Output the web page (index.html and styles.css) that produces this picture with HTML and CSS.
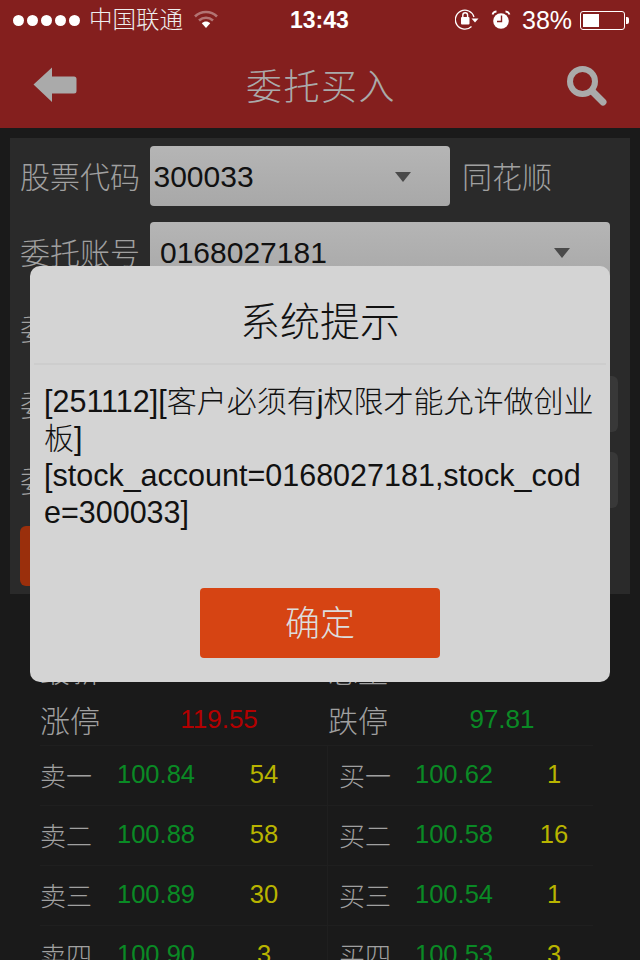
FILE: index.html
```html
<!DOCTYPE html>
<html lang="zh-CN">
<head>
<meta charset="utf-8">
<title>委托买入</title>
<link rel="stylesheet" href="styles.css">
</head>
<body>
<div class="page">
  <div class="top">
    <div class="status">
      <div class="dots"><i></i><i></i><i></i><i></i><i></i></div>
      <span class="carrier">中国联通</span>
      <svg class="wifi" width="24" height="18" viewBox="0 0 24 18"><path d="M1 6.500C7 .5 17 .5 23 6.500" fill="none" stroke="#fff" stroke-opacity=".38" stroke-width="2.600"/><path d="M5 10.500C9.200 6.800 14.800 6.800 19 10.500" fill="none" stroke="#fff" stroke-opacity=".38" stroke-width="2.600"/><path d="M7.800 13.200C10.200 11 13.800 11 16.200 13.200L12 18Z" fill="#fff"/></svg>
      <span class="time">13:43</span>
      <svg class="lock" width="24" height="22" viewBox="0 0 24 22"><path d="M19 8A9.500 9.500 0 1 0 16.500 17.500" fill="none" stroke="#fff" stroke-width="1.300"/><path d="M16.500 9.500H23.500L20 13.500Z" fill="#fff"/><rect x="6" y="8" width="8.500" height="7.500" rx="1" fill="#fff"/><path d="M7.800 8V6.200a2.400 2.400 0 0 1 4.800 0V8" fill="none" stroke="#fff" stroke-width="1.400"/></svg>
      <svg class="alarm" width="20" height="20" viewBox="0 0 20 20"><circle cx="10" cy="11" r="7.800" fill="#fff"/><path d="M10.500 5.500V11.500H6" fill="none" stroke="#841f1e" stroke-width="1.400"/><path d="M1.500 4.500Q2.500 1.500 5.500 1.500M18.500 4.500Q17.500 1.500 14.500 1.500" fill="none" stroke="#fff" stroke-width="1.800"/></svg>
      <span class="pct">38%</span>
      <div class="battery"><div class="level"></div></div>
      <div class="nub"></div>
    </div>
    <header class="bar">
      <svg class="back" width="44" height="36" viewBox="0 0 44 36"><path d="M0.500 17.500 19 0.500V9.500H41a2.500 2.500 0 0 1 2.500 2.500V24a2.500 2.500 0 0 1-2.500 2.500H19V35Z" fill="#aaa"/></svg>
      <h1 class="title">委托买入</h1>
      <svg class="search" width="40" height="40" viewBox="0 0 40 40"><circle cx="15.500" cy="15.500" r="12.500" fill="none" stroke="#aaa" stroke-width="6"/><path d="M25 25 36 36" stroke="#aaa" stroke-width="7" stroke-linecap="round"/></svg>
    </header>
  </div>

  <form class="panel">
    <div class="row">
      <span class="label">股票代码</span>
      <div class="select code"><span class="val">300033</span><b class="caret"></b></div>
      <span class="label name">同花顺</span>
    </div>
    <div class="row">
      <span class="label">委托账号</span>
      <div class="select account"><span class="val">0168027181</span><b class="caret"></b></div>
    </div>
    <div class="row third">
      <span class="label">委托方式</span>
    </div>
    <div class="row short">
      <span class="label">委托价格</span>
      <div class="field"></div>
    </div>
    <div class="row short">
      <span class="label">委托数量</span>
      <div class="field"></div>
    </div>
    <div class="submit"></div>
  </form>

  <section class="quote">
    <div class="head"><div class="head-cell"><span class="head-label">最新</span></div><div class="head-cell right"><span class="head-label">总量</span></div></div>
    <div class="head"><div class="head-cell"><span class="head-label">涨停</span><span class="limit up">119.55</span></div><div class="head-cell right"><span class="head-label">跌停</span><span class="limit down">97.81</span></div></div>
    <div class="book">
      <div class="side">
        <div class="tick"><span class="tl">卖一</span><span class="tp">100.84</span><span class="tq">54</span></div>
        <div class="tick"><span class="tl">卖二</span><span class="tp">100.88</span><span class="tq">58</span></div>
        <div class="tick"><span class="tl">卖三</span><span class="tp">100.89</span><span class="tq">30</span></div>
        <div class="tick"><span class="tl">卖四</span><span class="tp">100.90</span><span class="tq">3</span></div>
      </div>
      <div class="side buy">
        <div class="tick"><span class="tl">买一</span><span class="tp">100.62</span><span class="tq">1</span></div>
        <div class="tick"><span class="tl">买二</span><span class="tp">100.58</span><span class="tq">16</span></div>
        <div class="tick"><span class="tl">买三</span><span class="tp">100.54</span><span class="tq">1</span></div>
        <div class="tick"><span class="tl">买四</span><span class="tp">100.53</span><span class="tq">3</span></div>
      </div>
    </div>
  </section>

  <div class="modal">
    <h2 class="modal-title">系统提示</h2>
    <p class="modal-body"><span class="en">[251112][</span>客户必须有<span class="en">j</span>权限才能允许做创业板<span class="en">]</span><br><span class="en">[stock_account=0168027181,stock_code=300033]</span></p>
    <button class="ok" type="button">确定</button>
  </div>
</div>
</body>
</html>
```
FILE: styles.css
```css
* { box-sizing: border-box; }
html, body { margin: 0; padding: 0; background: #1a1a1a; }
body { font-family: "Liberation Sans", "Noto Sans CJK SC", sans-serif; font-weight: 300; }
.page { position: relative; width: 640px; height: 960px; overflow: hidden; }

.top { background: #841f1e; height: 128px; }
.status { height: 40px; display: flex; align-items: center; padding-left: 13px; color: #fff; }
.dots { display: flex; gap: 3px; width: 76px; }
.dots i { width: 11px; height: 11px; border-radius: 50%; background: #fff; }
.carrier { font-size: 23.500px; color: #eee; width: 105px; padding-bottom: 4px; }
.wifi { width: 24px; margin-top: -2px; }
.time { font-size: 23px; font-weight: bold; margin-left: 72px; width: 60px; }
.lock { margin-left: 105px; }
.alarm { margin-left: 12px; }
.pct { font-size: 25px; margin-left: 11px; width: 58px; }
.battery { width: 45px; height: 19px; border: 1px solid #fff; border-radius: 3px; padding: 2px; }
.level { width: 16px; height: 100%; background: #fff; }
.nub { width: 3px; height: 7px; background: #fff; border-radius: 0 2px 2px 0; margin-left: 1px; }

.bar { height: 88px; display: flex; align-items: center; justify-content: space-between; padding: 0 33px; }
.back { margin-top: 1px; }
.title { margin: 0 2px 0 0; font-size: 36px; font-weight: 300; letter-spacing: 1.500px; color: #aaa; }
.search { margin-top: 3px; }

.panel { margin: 10px 10px 0; height: 456px; background: #2a2a2a; padding: 8px 10px; }
.row { display: flex; align-items: center; height: 60px; margin-bottom: 16px; }
.row.third { margin-bottom: 18px; }
.row.short { height: 56px; margin-bottom: 20px; }
.label { font-size: 30px; color: #a0a0a0; width: 130px; flex: none; padding-bottom: 2px; }
.name { margin-left: 12px; width: auto; }
.select { height: 60px; border-radius: 4px; background: linear-gradient(#b5b5b5, #a8a8a8); display: flex; align-items: center; justify-content: space-between; color: #111; font-size: 30px; padding-top: 2px; }
.code { width: 300px; padding-right: 39px; padding-left: 3.500px; }
.account { width: 460px; padding-right: 40px; padding-left: 10px; }
.caret { width: 0; height: 0; border-style: solid; border-width: 10px 8px 0; border-color: #4a4a4a transparent transparent; }
.field { width: 468px; height: 56px; background: #383838; border-radius: 6px; }
.submit { height: 60px; width: 100px; margin-top: -2px; background: #9a2f0c; border-radius: 6px; }

.quote { padding-top: 51px; }
.head { display: flex; height: 50px; align-items: center; padding-left: 40px; padding-bottom: 2px; color: #a0a0a0; }
.head-cell { display: flex; align-items: center; width: 288px; }
.head-label { font-size: 30px; width: 80px; }
.limit { font-size: 26px; width: 198px; text-align: center; }
.head-cell.right .limit { width: 188px; }
.up { color: #b40000; }
.down { color: #0a8a25; }
.book { display: flex; padding-left: 40px; width: 593px; }
.side { width: 287px; }
.side.buy { width: 266px; border-left: 1px solid #1f1f1f; }
.tick { display: flex; align-items: center; height: 60px; border-top: 1px solid #1f1f1f; padding-bottom: 2px; }
.buy .tick { padding-left: 11px; }
.tl { font-size: 26px; color: #a0a0a0; width: 77px; flex: none; }
.tp { font-size: 25.500px; color: #0a8a25; width: 106px; flex: none; }
.tq { font-size: 25.500px; color: #b8b400; width: 82px; text-align: center; flex: none; }
.buy .tl { width: 76px; }
.buy .tp { width: 105px; }
.buy .tq { width: 68px; }

.modal { position: absolute; left: 30px; top: 266px; width: 580px; height: 416px; background: #d4d4d4; border-radius: 10px; display: flex; flex-direction: column; align-items: center; }
.modal-title { width: 572px; height: 99px; margin: 0; border-bottom: 2px solid #cdcdcd; font-size: 40px; font-weight: 300; text-align: center; line-height: 112px; color: #111; }
.modal-body { width: 552px; padding-right: 2px; margin: 18px 0 0; font-size: 30px; line-height: 36px; color: #111; word-break: break-all; }
.en { font-size: 30.500px; }
.ok { margin-top: auto; margin-bottom: 24px; width: 240px; height: 70px; border: 0; border-radius: 4px; padding: 0 0 5px; background: #d64413; color: #ddd; font-family: inherit; font-weight: 300; font-size: 35px; }
```
